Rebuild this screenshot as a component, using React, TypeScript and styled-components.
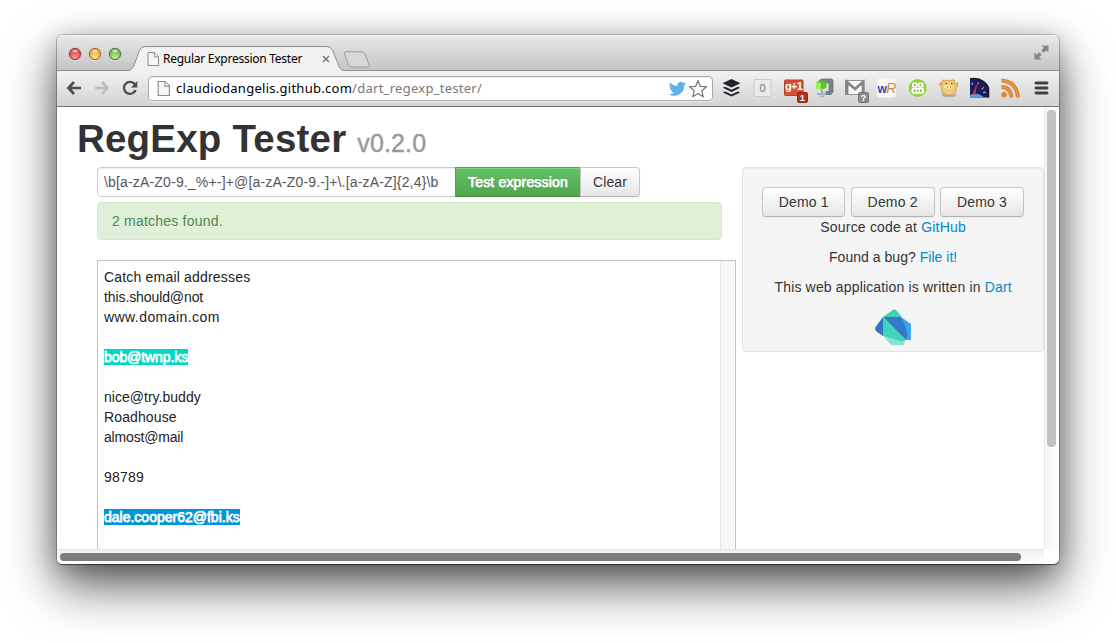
import styled, { createGlobalStyle } from "styled-components";

const Global = createGlobalStyle`
  * { box-sizing: border-box; }
  html, body { margin: 0; background: #fff; overflow: hidden; }
  body { font: 14px/20px "Liberation Sans", Arial, sans-serif; color: #333; }
`;

const Desktop = styled.div`
  width: 1116px;
  height: 643px;
  padding: 35px 57px 0 57px;
  overflow: hidden;
`;

const BrowserWindow = styled.div`
  width: 1002px;
  height: 529px;
  display: flex;
  flex-direction: column;
  border-radius: 5px;
  background: #fff;
  overflow: hidden;
  box-shadow: 0 0 0 1px rgba(0, 0, 0, 0.2), 0 1px 1px rgba(0, 0, 0, 0.45),
    0 22px 50px rgba(0, 0, 0, 0.62), 0 6px 26px rgba(0, 0, 0, 0.26);
`;

const TitleBar = styled.div`
  flex: none;
  height: 36px;
  display: flex;
  align-items: flex-end;
  background: linear-gradient(#e9e9e9, #c3c3c3);
  box-shadow: inset 0 1px #f4f4f4, inset 0 -1px #929292;
`;

const Lights = styled.div`
  display: flex;
  gap: 8px;
  width: 70px;
  padding: 0 0 11px 12px;
`;

const Light = styled.i<{ $rim: string; $mid: string; $glow: string }>`
  width: 12px;
  height: 12px;
  flex: none;
  border-radius: 50%;
  border: 1px solid ${(p) => p.$rim};
  background: radial-gradient(ellipse 4px 2px at 50% 20%, #ffffffd8, #fff0),
    radial-gradient(circle at 50% 95%, ${(p) => p.$glow}, ${(p) => p.$mid} 80%);
  box-shadow: 0 0 1px ${(p) => p.$rim}, 0 1px #ffffff90;
`;

const TabShape = styled.div`
  width: 218px;
  height: 25px;
  flex: none;
  display: grid;
  > * { grid-area: 1 / 1; }
`;

const TabContent = styled.div`
  display: flex;
  align-items: center;
  padding: 1px 11px 0 20px;
  font: 12px/16px "Noto Sans", "Open Sans", sans-serif;
  color: #000;
  z-index: 1;
`;

const TabTitle = styled.span`
  margin-left: 4px;
  width: 159px;
  white-space: nowrap;
  letter-spacing: -0.26px;
`;

const NewTab = styled.svg`
  margin: 0 0 3px -2px;
`;

const Expand = styled.svg`
  margin: 0 10px 11px auto;
`;

const Toolbar = styled.div`
  flex: none;
  height: 36px;
  display: flex;
  align-items: center;
  background: linear-gradient(#f2f2f2, #d3d3d3);
  border-bottom: 1px solid #747474;
`;

const NavButtons = styled.div`
  display: flex;
  gap: 12px;
  width: 91px;
  padding: 0 0 1px 9px;
`;

const Omnibox = styled.div`
  width: 565px;
  height: 25px;
  display: flex;
  align-items: center;
  padding: 0 4px 0 8px;
  background: #fff;
  border: 1px solid #a9a9a9;
  border-radius: 4px;
  box-shadow: inset 0 1px #ececec, 0 1px #ffffff80;
`;

const Url = styled.span`
  flex: 1;
  margin: 0 0 2px 6px;
  font: 13px/20px "Noto Sans", "Open Sans", sans-serif;
  letter-spacing: 0.27px;
  color: #777;
  white-space: nowrap;
  b { font-weight: 400; color: #000; }
`;

const TwitterIcon = styled.svg`
  margin-left: 1px;
`;

const StarIcon = styled.svg`
  margin-left: 2px;
`;

const Extensions = styled.div`
  display: flex;
  margin-left: 3px;
  padding-bottom: 1px;
  svg { width: 31px; height: 26px; flex: none; display: block; overflow: visible; }
`;

const Viewport = styled.div`
  flex: 1;
  min-height: 0;
  display: grid;
  grid-template-columns: 987px 15px;
  grid-template-rows: 1fr 15px;
`;

const Page = styled.main`
  display: flex;
  flex-direction: column;
  overflow: hidden;
  padding-left: 21px;
`;

const Heading = styled.h1`
  margin: 0 0 0 -1px;
  height: 60px;
  padding-top: 12px;
  font-size: 38.5px;
  line-height: 40px;
  font-weight: 700;
  letter-spacing: 0.2px;
  white-space: nowrap;
  small {
    font-size: 25px;
    font-weight: 400;
    letter-spacing: 0.15px;
    color: #999;
    -webkit-text-stroke: 0.4px #999;
  }
`;

const Columns = styled.div`
  display: flex;
  flex: 1;
  align-items: flex-start;
  min-height: 0;
`;

const MainColumn = styled.section`
  width: 664px;
  height: 100%;
  padding-left: 19px;
  display: flex;
  flex-direction: column;
`;

const ExpressionForm = styled.div`
  display: flex;
`;

const ExpressionInput = styled.div`
  width: 359px;
  height: 30px;
  padding: 4px 6px;
  border: 1px solid #ccc;
  border-radius: 4px 0 0 4px;
  box-shadow: inset 0 1px 1px rgba(0, 0, 0, 0.075);
  color: #555;
  letter-spacing: 0.17px;
  white-space: nowrap;
`;

const Button = styled.button<{ $kind?: "success" | "last"; $width: number }>`
  width: ${(p) => p.$width}px;
  height: 30px;
  margin: 0 0 0 ${(p) => (p.$kind ? "-1px" : "0")};
  padding: 0;
  font: 14px/20px "Liberation Sans", Arial, sans-serif;
  letter-spacing: ${(p) => (p.$kind === "last" ? 0.1 : 0.17)}px;
  border: 1px solid ${(p) => (p.$kind === "success" ? "#51a351" : "#c5c5c5")};
  border-bottom-color: ${(p) => (p.$kind === "success" ? "#438a43" : "#b3b3b3")};
  border-radius: ${(p) => (p.$kind === "success" ? "0" : p.$kind === "last" ? "0 4px 4px 0" : "4px")};
  color: ${(p) => (p.$kind === "success" ? "#fff" : "#333")};
  background: ${(p) =>
    p.$kind === "success" ? "linear-gradient(#62c462, #51a351)" : "linear-gradient(#fff, #e6e6e6)"};
  -webkit-text-stroke: ${(p) => (p.$kind === "success" ? "0.7px #fff" : "0")};
  text-shadow: ${(p) => (p.$kind === "success" ? "0 -1px 0 rgba(0,0,0,.25)" : "0 1px 1px rgba(255,255,255,.75)")};
  box-shadow: inset 0 1px 0 rgba(255, 255, 255, 0.2), 0 1px 2px rgba(0, 0, 0, 0.05);
`;

const Alert = styled.div`
  width: 625px;
  height: 38px;
  margin-top: 5px;
  padding: 8px 14px;
  color: #468847;
  background: #dff0d8;
  border: 1px solid #d6e9c6;
  border-radius: 4px;
  text-shadow: 0 1px 0 rgba(255, 255, 255, 0.5);
  letter-spacing: 0.21px;
`;

const Editor = styled.div`
  flex: 1;
  width: 639px;
  margin-top: 20px;
  display: flex;
  border: 1px solid #c3c3c3;
  border-bottom: 0;
`;

const EditorText = styled.div`
  flex: 1;
  padding: 6px;
  white-space: pre;
  color: #222;
`;

const EditorLine = styled.div<{ $track: number }>`
  height: 20px;
  letter-spacing: ${(p) => p.$track}px;
`;

const InnerTrack = styled.div`
  width: 15px;
  border-left: 1px solid #e4e4e4;
  background: linear-gradient(90deg, #f3f3f3, #fcfcfc);
`;

const Match = styled.mark<{ $color: string }>`
  background: ${(p) => p.$color};
  color: #fff;
  -webkit-text-stroke: 0.75px #fff;
`;

const Well = styled.aside`
  width: 302px;
  height: 185px;
  margin-left: 1px;
  padding: 19px;
  background: #f5f5f5;
  border: 1px solid #e3e3e3;
  border-radius: 4px;
  box-shadow: inset 0 1px 1px rgba(0, 0, 0, 0.05);
  text-align: center;
  svg { display: block; margin: 0 auto; }
`;

const DemoRow = styled.div`
  display: flex;
  justify-content: space-between;
`;

const Line = styled.p<{ $track: number }>`
  margin: 0 0 10px;
  white-space: nowrap;
  letter-spacing: ${(p) => p.$track}px;
  a { color: #0088cc; }
  & + svg { margin-top: 12px; }
`;

const VTrack = styled.div`
  border-left: 1px solid #e7e7e7;
  background: linear-gradient(90deg, #f6f6f6, #fefefe);
  padding: 3px 2px;
`;

const HTrack = styled.div`
  border-top: 1px solid #e2e2e2;
  background: linear-gradient(#f1f1f1, #fdfdfd);
  padding: 3px;
`;

const Thumb = styled.div<{ $w: number; $h: number; $color: string }>`
  width: ${(p) => p.$w}px;
  height: ${(p) => p.$h}px;
  border-radius: 4px;
  background: ${(p) => p.$color};
`;

const PageIcon = ({ w = 12, h = 14 }: { w?: number; h?: number }) => (
  <svg width={w} height={h} viewBox="0 0 12 14">
    <path d="M1 .5h6.5l4 4v9H1z" fill="#f5f5f5" stroke="#8a8a8a" />
    <path d="M7.3.7v4.1h4" fill="#fff" stroke="#8a8a8a" />
  </svg>
);

const editorLines: { text: string; track?: number; color?: string }[] = [
  { text: "Catch email addresses", track: 0.19 },
  { text: "this.should@not", track: -0.1 },
  { text: "www.domain.com", track: 0.43 },
  { text: "" },
  { text: "bob@twnp.ks", track: -0.08, color: "#00d8c4" },
  { text: "" },
  { text: "nice@try.buddy", track: 0.02 },
  { text: "Roadhouse", track: 0.12 },
  { text: "almost@mail", track: -0.17 },
  { text: "" },
  { text: "98789", track: 0.2 },
  { text: "" },
  { text: "dale.cooper62@fbi.ks", color: "#0095d6" },
];

const ExtensionIcons = () => (
  <Extensions>
    <svg viewBox="0 0 31 26">
      <path d="M15.500 4l9 4.200-9 4.200-9-4.200z" fill="#202327" />
      <path d="M6.800 12.700l2.400-1 6.300 3 6.300-3 2.400 1-8.700 4.200zM6.800 17.400l2.400-1 6.300 3 6.300-3 2.400 1-8.700 4.200z" fill="#202327" />
    </svg>
    <svg viewBox="0 0 31 26">
      <rect x="7" y="4.500" width="17" height="17" rx="1" fill="#ececec" stroke="#c9c9c9" />
      <text x="15.500" y="17" textAnchor="middle" fontSize="11" fontFamily="Liberation Sans, sans-serif" fill="#8e8e8e" stroke="#8e8e8e" strokeWidth=".3">0</text>
    </svg>
    <svg viewBox="0 0 31 26">
      <rect x="6.500" y="5" width="18.500" height="15.500" rx="1" fill="#d64f36" stroke="#b83c27" />
      <text x="7" y="14.800" fontSize="11" fontWeight="700" letterSpacing="-.7" fontFamily="Liberation Sans, sans-serif" fill="#fff">g+1</text>
      <rect x="19.500" y="17.500" width="10" height="10" rx="1.500" fill="#b93119" stroke="#972412" />
      <text x="24.500" y="26" textAnchor="middle" fontSize="9.500" fontWeight="700" fontFamily="Liberation Sans, sans-serif" fill="#fff">1</text>
    </svg>
    <svg viewBox="0 0 31 26">
      <path d="M10 5.500l3-1.500h10l1 2v11l-2 2.500h-5v-3h3V8h-9z" fill="#77838c" stroke="#5e6a73" strokeWidth=".7" />
      <path d="M7 7l6-1.500 4.500 1v6.500l-5 1.500L7 13.500z" fill="#56c51e" />
      <path d="M7 7l5 .9v6.600L7 13.500z" fill="#9bee59" />
      <path d="M13 15v3.500" stroke="#8293a0" strokeWidth="1.500" />
      <path d="M8 19h9M10.500 21.300h5" stroke="#a3b3c0" strokeWidth="1.800" />
    </svg>
    <svg viewBox="0 0 31 26">
      <rect x="5.500" y="5.500" width="18.500" height="14" fill="#f7f7f7" stroke="#929292" />
      <path d="M7 19V7l8 7 8-7v12" fill="none" stroke="#858585" strokeWidth="2.800" />
      <rect x="18.500" y="17.500" width="10" height="10" rx="1.500" fill="#8d8d8d" stroke="#747474" />
      <text x="23.500" y="26" textAnchor="middle" fontSize="9.500" fontWeight="700" fontFamily="Liberation Sans, sans-serif" fill="#fff">?</text>
    </svg>
    <svg viewBox="0 0 31 26">
      <rect x="6" y="3.500" width="19" height="19" rx="3" fill="#f6f8fa" />
      <text x="6.500" y="17.500" fontSize="12" fontWeight="700" fontFamily="Liberation Sans, sans-serif" fill="#3345ac">w</text>
      <text x="15.200" y="18" fontSize="14" fontStyle="italic" fontFamily="Liberation Sans, sans-serif" fill="#d38b2d">R</text>
    </svg>
    <svg viewBox="0 0 31 26">
      <circle cx="15.700" cy="13" r="9" fill="#93d048" />
      <rect x="10" y="7.500" width="5.500" height="5" rx="1.500" fill="#fff" />
      <rect x="16" y="7.500" width="5.500" height="5" rx="1.500" fill="#fff" />
      <rect x="9.500" y="12.700" width="12.500" height="6" rx="2" fill="#fff" />
      <path d="M12 9.200h2v1.700h-2zM17.500 9.200h2v1.700h-2zM11.700 14.500h2v2.300h-2zM15 14.500h1.500v2.300H15zM17.800 14.500h2v2.300h-2z" fill="#7cc02f" />
    </svg>
    <svg viewBox="0 0 31 26">
      <ellipse cx="16" cy="20" rx="7.500" ry="2.300" fill="#00000030" />
      <path d="M9.500 7.500Q9 4.500 11.500 4.800q.8 1.500 2 .8 2-.8 4 0 1.200.7 2-.8 2.500-.3 2 2.700l1 2q.5-2.500 2-1.500 1.300 2-1.500 4.500Q24 20 16 20.500 8 20 8.500 12.500 5.500 10 7 8q1.500-1 1.800 1.500z" fill="#f2ca77" stroke="#c58b36" strokeWidth=".8" />
      <ellipse cx="15.500" cy="11.800" rx="4.500" ry="2" fill="#fbe1a4" />
      <path d="M12.500 8.500h1.500M18 8.500h1.500M14 12h.8M17 12h.8" stroke="#6d451a" />
    </svg>
    <svg viewBox="0 0 31 26">
      <path d="M6 4Q14 2.500 19.500 6.500T25 15v7.500H6z" fill="#1c1c58" />
      <path d="M6 4Q14 2.500 19.500 6.500T24.500 15v7.500" fill="none" stroke="#15151f" strokeWidth="1.500" />
      <path d="M6 20q8-3.500 14 2.500H6z" fill="#5f9bd8" />
      <path d="M8 7.500l.5 2.500M14.500 7.500l-1 2M20 12.500l-2.500 1.500M22 17l-3 .5" stroke="#c8cbe8" />
      <path d="M9 19.500L12.500 10l-1.500 8.500z" fill="#f0302b" stroke="#f0302b" strokeWidth=".7" />
    </svg>
    <svg viewBox="0 0 31 26">
      <circle cx="9" cy="19.800" r="2.700" fill="#dd812b" />
      <path d="M6.500 12q9 0 10 10.500M6.500 5.500q15 1 16.500 17" fill="none" stroke="#dd812b" strokeWidth="3.800" />
      <path d="M6.500 12q9 0 10 10.500M6.500 5.500q15 1 16.500 17" fill="none" stroke="#f0a557" strokeWidth="1" />
    </svg>
    <svg viewBox="0 0 31 26">
      <path d="M10 8h11M10 13h11M10 18h11" stroke="#404040" strokeWidth="2.900" strokeLinecap="round" />
    </svg>
  </Extensions>
);

export default function App() {
  return (
    <Desktop>
      <Global />
      <BrowserWindow>
        <TitleBar>
          <Lights>
            <Light $rim="#8e2f2c" $mid="#dd4444" $glow="#ff9c94" />
            <Light $rim="#98611f" $mid="#eba63c" $glow="#ffe880" />
            <Light $rim="#426f2c" $mid="#6fb951" $glow="#c4f590" />
          </Lights>
          <TabShape>
            <svg width="218" height="25" viewBox="0 0 218 25">
              <path
                d="M0 24.500C5 24.500 6 22 8 17L12 5Q14 .5 18 .5H200Q204 .5 206 5L211 18C213 23 214 24.500 218 24.500V25H0z"
                fill="#f1f1f1"
              />
              <path
                d="M0 24.500C5 24.500 6 22 8 17L12 5Q14 .5 18 .5H200Q204 .5 206 5L211 18C213 23 214 24.500 218 24.500"
                fill="none"
                stroke="#8f8f8f"
              />
            </svg>
            <TabContent>
              <PageIcon />
              <TabTitle>Regular Expression Tester</TabTitle>
              <svg width="8" height="8" viewBox="0 0 8 8">
                <path d="M1 1l6 6M7 1L1 7" stroke="#7d7d7d" strokeWidth="1.600" />
              </svg>
            </TabContent>
          </TabShape>
          <NewTab width="28" height="17" viewBox="0 0 28 17">
            <path
              d="M3 .8H18.500Q21 .8 22 3L26 13.500Q27 16 24.500 16H9Q6.500 16 5.500 14L1.500 3Q.8.8 3 .8z"
              fill="#d8d8d8"
              stroke="#9b9b9b"
            />
          </NewTab>
          <Expand width="15" height="15" viewBox="0 0 15 15">
            <path d="M7.500 .5h7v7l-2.300-2.300-2.500 2.500-2.400-2.400 2.500-2.500zM.5 7.500v7h7l-2.300-2.300 2.500-2.500-2.400-2.400-2.500 2.500z" fill="#858585" />
          </Expand>
        </TitleBar>
        <Toolbar>
          <NavButtons>
            <svg width="16" height="16" viewBox="0 0 16 16">
              <path d="M8 2L2.500 8 8 14M3 8h12" fill="none" stroke="#4c4c4c" strokeWidth="2.600" />
            </svg>
            <svg width="16" height="16" viewBox="0 0 16 16">
              <path d="M8 2l5.500 6L8 14M13 8H1" fill="none" stroke="#bdbdbd" strokeWidth="2.600" />
            </svg>
            <svg width="16" height="16" viewBox="0 0 16 16">
              <path d="M12.800 4.200A6 6 0 1 0 13.600 10" fill="none" stroke="#4c4c4c" strokeWidth="2.300" />
              <path d="M15.300 1v6.500H8.800z" fill="#4c4c4c" />
            </svg>
          </NavButtons>
          <Omnibox>
            <PageIcon w={13} h={15} />
            <Url>
              <b>claudiodangelis.github.com</b>/dart_regexp_tester/
            </Url>
            <TwitterIcon width="17" height="16" viewBox="0 0 24 20">
              <path
                d="M24 2.400a10 10 0 0 1-2.800.8A5 5 0 0 0 23.300.4a10 10 0 0 1-3.100 1.200A4.900 4.900 0 0 0 11.800 6 14 14 0 0 1 1.700.9a4.900 4.900 0 0 0 1.500 6.600A5 5 0 0 1 1 6.900a4.900 4.900 0 0 0 3.900 4.900 5 5 0 0 1-2.200.1 4.900 4.900 0 0 0 4.600 3.400A10 10 0 0 1 0 17.300 14 14 0 0 0 21.500 4.900 10 10 0 0 0 24 2.400z"
                fill="#5eb1ed"
              />
            </TwitterIcon>
            <StarIcon width="20" height="20" viewBox="0 0 20 20">
              <path
                d="M10 1.500l2.300 5.800 6.200.4-4.800 4 1.600 6.100L10 14.400l-5.300 3.400 1.600-6.100-4.800-4 6.200-.4z"
                fill="#fff"
                stroke="#777"
                strokeWidth="1.200"
                strokeLinejoin="round"
              />
            </StarIcon>
          </Omnibox>
          <ExtensionIcons />
        </Toolbar>
        <Viewport>
          <Page>
            <Heading>
              RegExp Tester <small>v0.2.0</small>
            </Heading>
            <Columns>
              <MainColumn>
                <ExpressionForm>
                  <ExpressionInput>{"\\b[a-zA-Z0-9._%+-]+@[a-zA-Z0-9.-]+\\.[a-zA-Z]{2,4}\\b"}</ExpressionInput>
                  <Button $kind="success" $width={126}>Test expression</Button>
                  <Button $kind="last" $width={60}>Clear</Button>
                </ExpressionForm>
                <Alert>2 matches found.</Alert>
                <Editor>
                  <EditorText>
                    {editorLines.map(({ text, track = 0, color }, i) => (
                      <EditorLine key={i} $track={track}>
                        {color ? <Match $color={color}>{text}</Match> : text}
                      </EditorLine>
                    ))}
                  </EditorText>
                  <InnerTrack />
                </Editor>
              </MainColumn>
              <Well>
                <DemoRow>
                  <Button $width={83}>Demo 1</Button>
                  <Button $width={84}>Demo 2</Button>
                  <Button $width={84}>Demo 3</Button>
                </DemoRow>
                <Line $track={0.19}>Source code at <a>GitHub</a></Line>
                <Line $track={0.03}>Found a bug? <a>File it!</a></Line>
                <Line $track={0.16}>This web application is written in <a>Dart</a></Line>
                <svg width="36" height="36" viewBox="0 0 36 36">
                  <path d="M8 8L18 .8Q19.500 0 21 1l6 7z" fill="#3fd0b2" />
                  <path d="M8 8v19L1.500 22.500Q-.5 20 .5 18z" fill="#3277c4" />
                  <path d="M26 8l10 7v16h-5z" fill="#40a4e8" />
                  <path d="M8 8h18q6 10 6.500 20l-2 3z" fill="#3479ca" />
                  <path d="M8 8l23 23-4.500 2L8 27z" fill="#40d5b9" />
                  <path d="M8 27l19 6 3.500-2-1.500 5H16z" fill="#86e4d3" />
                </svg>
              </Well>
            </Columns>
          </Page>
          <VTrack>
            <Thumb $w={9} $h={337} $color="#c1c1c1" />
          </VTrack>
          <HTrack>
            <Thumb $w={961} $h={8} $color="#7d7d7d" />
          </HTrack>
        </Viewport>
      </BrowserWindow>
    </Desktop>
  );
}
